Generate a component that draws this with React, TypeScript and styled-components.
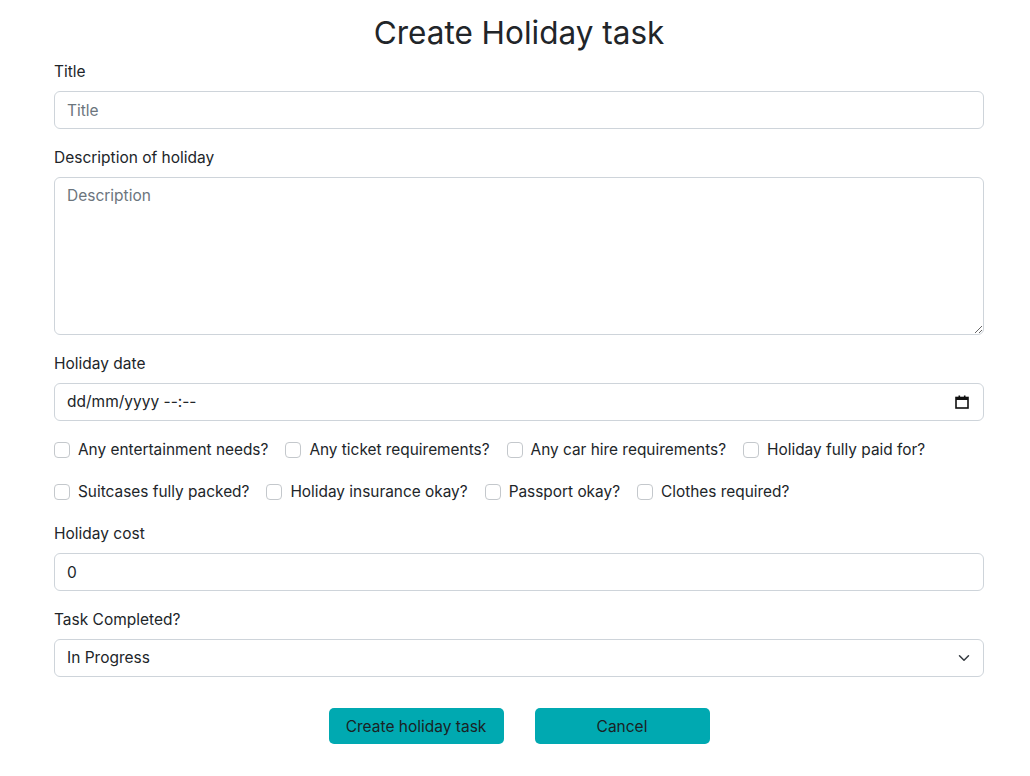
import React from "react";
import styled, { createGlobalStyle } from "styled-components";

const Global = createGlobalStyle`
  * { box-sizing: border-box; }
  body {
    margin: 0 0 0 8px;
    font-family: Inter, "Noto Sans", sans-serif;
    color: #212529;
    background: #fff;
    font-size: 16px;
    line-height: 24px;
  }
`;

const Page = styled.div`
  width: 930px;
  margin: 0 auto;
  padding-top: 14px;
`;

const Heading = styled.h1`
  margin: 0 0 7px;
  text-align: center;
  font-size: 31.5px;
  line-height: 38px;
  font-weight: 400;
  color: #212529;
`;

const Field = styled.div`
  margin-bottom: 16px;
`;

const Label = styled.label`
  display: block;
  margin-bottom: 8px;
  padding-top: 1px;
  font-size: 15.5px;
  line-height: 23px;
`;

const controlCss = `
  display: block;
  width: 100%;
  height: 38px;
  padding: 6px 12px;
  border: 1px solid #ced4da;
  border-radius: 6px;
  font-family: Inter, "Noto Sans", sans-serif;
  font-size: 15.5px;
  line-height: 24px;
  color: #212529;
  background: #fff;
  outline: none;
  &::placeholder { color: #6c757d; }
`;

const Input = styled.input`
  ${controlCss}
`;

const TextArea = styled.textarea`
  ${controlCss}
  height: 158px;
  resize: vertical;
`;

const DateControl = styled.div`
  ${controlCss}
  display: flex;
  align-items: center;
  justify-content: space-between;
  padding-right: 14px;
`;

const SelectWrap = styled.div`
  position: relative;
`;

const Select = styled.select`
  ${controlCss}
  appearance: none;
  -webkit-appearance: none;
  padding-right: 36px;
`;

const Chevron = styled.svg`
  position: absolute;
  right: 14px;
  top: 13px;
  pointer-events: none;
`;

const CheckRow = styled.div`
  display: flex;
  flex-wrap: wrap;
  align-items: center;
  height: 24px;
  margin-bottom: 18px;
`;

const CheckItem = styled.label`
  display: inline-flex;
  align-items: center;
  margin-right: 17px;
  padding-top: 1px;
  font-size: 15.4px;
  line-height: 24px;
`;

const CheckBox = styled.input.attrs({ type: "checkbox" })`
  appearance: none;
  -webkit-appearance: none;
  width: 16px;
  height: 16px;
  margin: 0 8px 0 0;
  border: 1px solid #c4c8cc;
  border-radius: 4px;
  background: #fff;
`;

const Actions = styled.div`
  display: flex;
  justify-content: center;
  gap: 31px;
  margin-top: 31px;
`;

const Button = styled.button`
  width: 175px;
  height: 36px;
  border: none;
  border-radius: 5px;
  background: #00a9b1;
  color: #1b2224;
  font-family: Inter, "Noto Sans", sans-serif;
  font-size: 15.5px;
  cursor: pointer;
`;

const rows = [
  ["Any entertainment needs?", "Any ticket requirements?", "Any car hire requirements?", "Holiday fully paid for?"],
  ["Suitcases fully packed?", "Holiday insurance okay?", "Passport okay?", "Clothes required?"],
];

export default function App() {
  return (
    <>
      <Global />
      <Page>
        <Heading>Create Holiday task</Heading>
        <Field>
          <Label>Title</Label>
          <Input placeholder="Title" />
        </Field>
        <Field>
          <Label>Description of holiday</Label>
          <TextArea placeholder="Description" />
        </Field>
        <Field>
          <Label>Holiday date</Label>
          <DateControl>
            <span>dd/mm/yyyy --:--</span>
            <svg width="14" height="14" viewBox="0 0 14 14">
              <rect x="1" y="2.5" width="12" height="10.5" fill="none" stroke="#111" strokeWidth="1.6" />
              <rect x="1" y="2.5" width="12" height="2.5" fill="#111" />
              <rect x="3.5" y="0.5" width="1.6" height="2.5" fill="#111" />
              <rect x="8.9" y="0.5" width="1.6" height="2.5" fill="#111" />
            </svg>
          </DateControl>
        </Field>
        {rows.map((row, i) => (
          <CheckRow key={i}>
            {row.map((t) => (
              <CheckItem key={t}>
                <CheckBox />
                {t}
              </CheckItem>
            ))}
          </CheckRow>
        ))}
        <Field>
          <Label>Holiday cost</Label>
          <Input defaultValue="0" />
        </Field>
        <Field>
          <Label>Task Completed?</Label>
          <SelectWrap>
            <Select defaultValue="progress">
              <option value="progress">In Progress</option>
              <option value="done">Completed</option>
            </Select>
            <Chevron width="12" height="12" viewBox="0 0 16 16">
              <path d="M2 5l6 6 6-6" fill="none" stroke="#343a40" strokeWidth="2" strokeLinecap="round" strokeLinejoin="round" />
            </Chevron>
          </SelectWrap>
        </Field>
        <Actions>
          <Button>Create holiday task</Button>
          <Button>Cancel</Button>
        </Actions>
      </Page>
    </>
  );
}
